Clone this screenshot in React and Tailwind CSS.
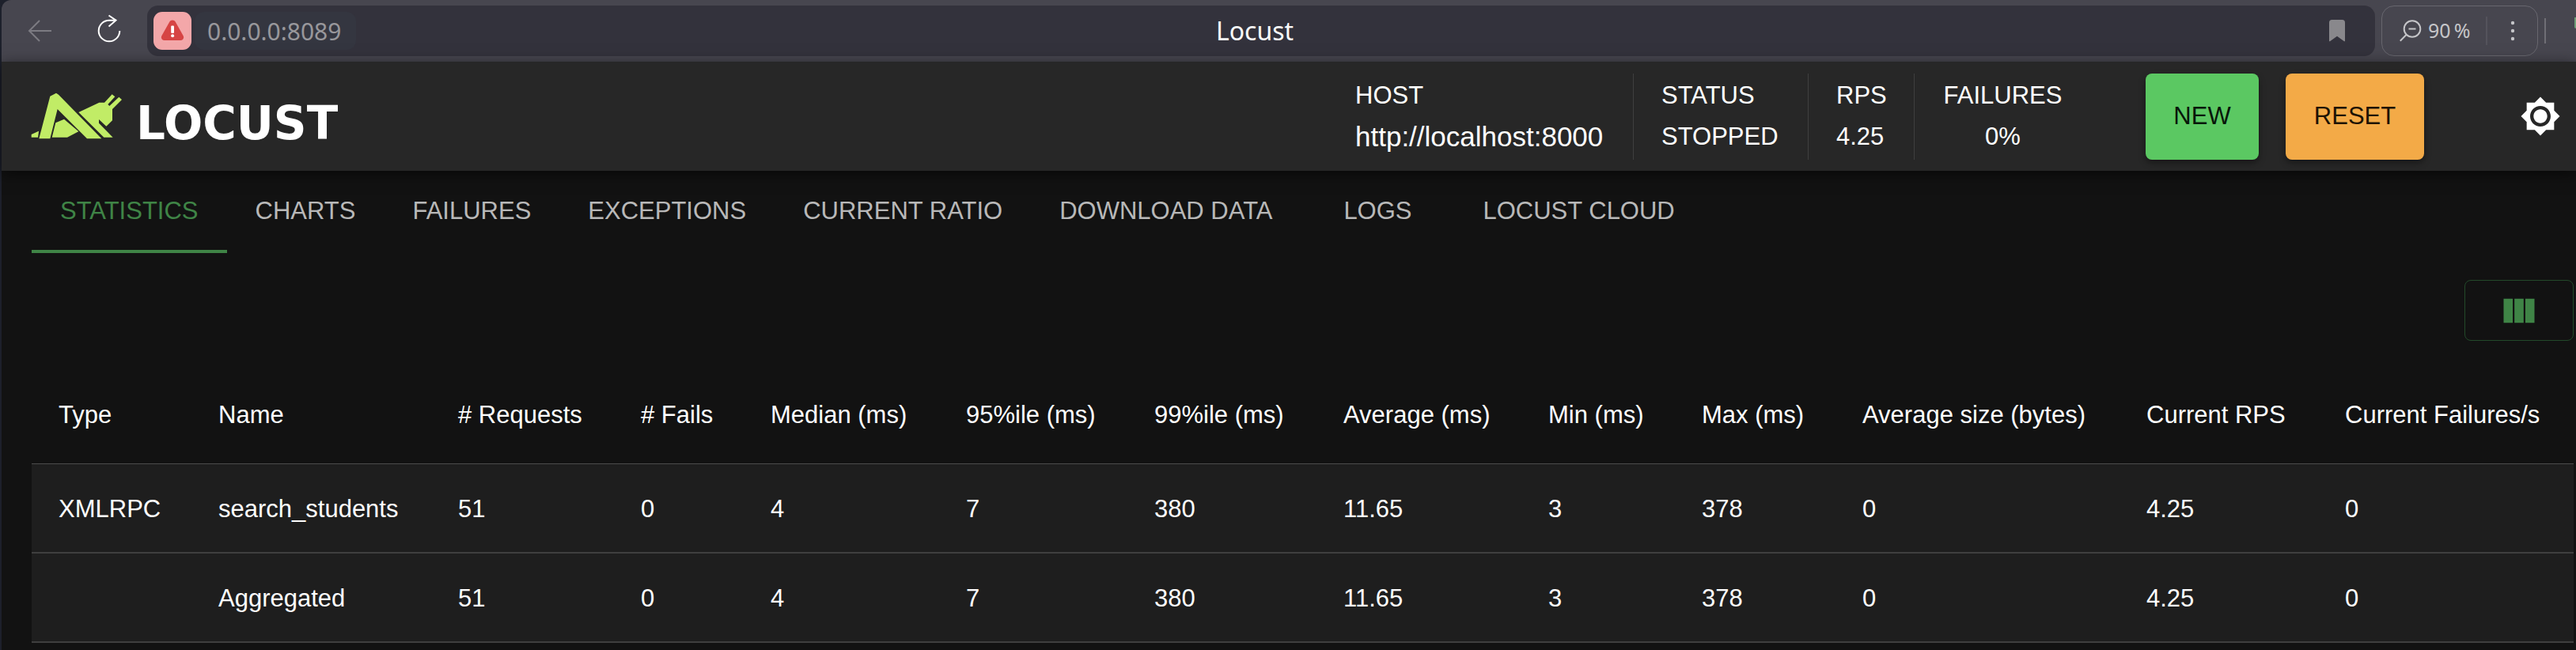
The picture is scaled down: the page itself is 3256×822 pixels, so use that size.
const tabs = [
  'Statistics',
  'Charts',
  'Failures',
  'Exceptions',
  'Current ratio',
  'Download data',
  'Logs',
  'Locust Cloud',
];

const columns = [
  { label: 'Type', width: 'w-[202px]' },
  { label: 'Name', width: 'w-[303px]' },
  { label: '# Requests', width: 'w-[231px]' },
  { label: '# Fails', width: 'w-[164px]' },
  { label: 'Median (ms)', width: 'w-[247px]' },
  { label: '95%ile (ms)', width: 'w-[238px]' },
  { label: '99%ile (ms)', width: 'w-[239px]' },
  { label: 'Average (ms)', width: 'w-[259px]' },
  { label: 'Min (ms)', width: 'w-[194px]' },
  { label: 'Max (ms)', width: 'w-[203px]' },
  { label: 'Average size (bytes)', width: 'w-[359px]' },
  { label: 'Current RPS', width: 'w-[251px]' },
  { label: 'Current Failures/s', width: 'w-[323px]' },
];

const rows = [
  ['XMLRPC', 'search_students', '51', '0', '4', '7', '380', '11.65', '3', '378', '0', '4.25', '0'],
  ['', 'Aggregated', '51', '0', '4', '7', '380', '11.65', '3', '378', '0', '4.25', '0'],
];

function BrowserBar() {
  return (
    <div className="flex h-[78px] items-center rounded-tl-[12px] bg-[#47464f] font-['Noto_Sans',sans-serif]">
      <button type="button" aria-label="Back" className="ml-[32px] shrink-0">
        <svg className="h-[32px] w-[32px]" viewBox="0 0 32 32" fill="none" stroke="#7c7b82" strokeWidth="2">
          <path d="M16 3 3 16l13 13M3 16h28" />
        </svg>
      </button>
      <button type="button" aria-label="Reload" className="ml-[54px] shrink-0">
        <svg
          className="h-[36px] w-[36px] overflow-visible"
          viewBox="0 0 36 36"
          fill="none"
          stroke="#ffffff"
          strokeWidth="2"
        >
          <path d="M31.300 18a13.300 13.300 0 1 1-13.300-13.300h8.500" />
          <path d="M17.500 -1.500 26.500 4.700 17.500 12.500" />
        </svg>
      </button>
      <div className="ml-[30px] flex h-[64px] flex-1 items-center rounded-[14px] bg-[#33323c] pr-[24px] pl-[8px]">
        <div className="flex flex-1 items-center gap-[4px]">
          <button
            type="button"
            aria-label="Connection is not secure"
            className="flex h-[48px] w-[48px] items-center justify-center rounded-[11px] bg-[#f3a7a9]"
          >
            <svg className="h-[30px] w-[30px]" viewBox="0 0 30 30">
              <path
                d="M11.200 3.800c1.700-3 5.900-3 7.600 0l9.700 17.200c1.600 2.900-.2 6-3.400 6H4.900c-3.200 0-5-3.100-3.400-6z"
                fill="#d64444"
              />
              <rect x="13.200" y="8.500" width="3.800" height="9.500" rx="1" fill="#ffffff" />
              <circle cx="15.100" cy="21.300" r="2" fill="#ffffff" />
            </svg>
          </button>
          <input
            type="text"
            aria-label="Address"
            defaultValue="0.0.0.0:8089"
            className="h-[48px] w-[204px] rounded-[12px] bg-[#343640] px-[16px] text-[30px] text-[#98979b] outline-none"
          />
        </div>
        <div className="text-[32px] text-[#fafafa]">Locust</div>
        <div className="flex flex-1 items-center justify-end">
          <button type="button" aria-label="Bookmark" className="mr-[14px]">
            <svg className="h-[28px] w-[20px]" viewBox="0 0 20 28" fill="#89888c">
              <path d="M0 3.500A3.500 3.500 0 0 1 3.500 0h13A3.500 3.500 0 0 1 20 3.500v23.200c0 .6-.6.800-1 .500l-9-6.500-9 6.500c-.4.300-1 .1-1-.5z" />
            </svg>
          </button>
        </div>
      </div>
      <div className="ml-[8px] flex h-[64px] w-[198px] items-center rounded-[16px] border border-[#67666e] text-[#c5c5c8]">
        <button type="button" className="ml-[22px] flex items-center gap-[8px]">
          <svg
            className="h-[28px] w-[28px]"
            viewBox="0 0 28 28"
            fill="none"
            stroke="currentColor"
            strokeWidth="2"
            aria-hidden="true"
          >
            <circle cx="16" cy="11.500" r="10.300" />
            <path d="M8.700 18.800.8 26.700M11.500 11.500h9" />
          </svg>
          <span className="w-[57px] text-left text-[25px] whitespace-nowrap">90&#8201;%</span>
        </button>
        <div className="ml-[16px] h-[36px] w-[2px] bg-[#54535c]" />
        <button type="button" aria-label="More" className="ml-[28px]">
          <svg className="h-[28px] w-[8px]" viewBox="0 0 8 28" fill="currentColor">
            <circle cx="4" cy="4" r="2.200" />
            <circle cx="4" cy="14" r="2.200" />
            <circle cx="4" cy="24" r="2.200" />
          </svg>
        </button>
      </div>
      <div className="ml-[8px] h-[32px] w-[2px] bg-[#6f6e75]" />
      <div className="mt-[22px] ml-[36px] h-[14px] w-[2px] self-start rounded-bl-full bg-[#6f9f77]" />
    </div>
  );
}

function Logo() {
  return (
    <a href="#" className="flex items-baseline">
      <svg className="h-[59px] w-[116px]" viewBox="117 352 348 177" fill="#c1ec66" aria-hidden="true">
        <path d="M119 511 147 498 144 522H119z" />
        <path d="M190 366 213 354 222 360 385 527H330L218 415 190 527H148z" />
        <path d="M211 467 243 453 298 500 255 522H197z" />
        <path d="M298 427 376 390H396L425 359 436 368 409 397 415 403 451 369 462 379 426 415V458L403 480 375 454V468L428 522H394z" />
      </svg>
      <span className="ml-[17px] font-['DejaVu_Sans',sans-serif] text-[58px] leading-[44px] font-bold text-white">
        LOCUST
      </span>
    </a>
  );
}

function Stat({ label, className, children }) {
  return (
    <div className={`flex h-[109px] flex-col justify-center ${className}`}>
      <div className="text-[31px] leading-[52px] uppercase">{label}</div>
      {children}
    </div>
  );
}

function Header() {
  return (
    <header className="relative flex h-[138px] items-center bg-[#272727] pr-[19px] pl-[37px] text-white shadow-[0_4px_18px_rgba(0,0,0,0.6)]">
      <Logo />
      <div className="ml-auto flex items-center">
        <Stat label="Host" className="w-[352px] border-r border-[#3f3f3f]">
          <div className="text-[35px] leading-[52px]">http://localhost:8000</div>
        </Stat>
        <Stat label="Status" className="w-[221px] border-r border-[#3f3f3f] pl-[35px]">
          <div className="text-[31px] leading-[52px] uppercase">Stopped</div>
        </Stat>
        <Stat label="RPS" className="w-[134px] border-r border-[#3f3f3f] pl-[35px]">
          <div className="text-[31px] leading-[52px]">4.25</div>
        </Stat>
        <Stat label="Failures" className="w-[188px] items-center pl-[35px]">
          <div className="text-[31px] leading-[52px]">0%</div>
        </Stat>
        <button
          type="button"
          className="ml-[104px] h-[109px] w-[143px] rounded-[8px] bg-[#5bc862] text-[31px] text-[#08170a] uppercase shadow-[0_4px_8px_rgba(0,0,0,0.4)]"
        >
          New
        </button>
        <button
          type="button"
          className="ml-[34px] h-[109px] w-[175px] rounded-[8px] bg-[#f3aa47] text-[31px] text-[#1d1304] uppercase shadow-[0_4px_8px_rgba(0,0,0,0.4)]"
        >
          Reset
        </button>
        <button type="button" aria-label="Toggle theme" className="ml-[121px]">
          <svg className="h-[52px] w-[52px]" viewBox="0 0 24 24" fill="currentColor">
            <path d="M20 8.690V4h-4.690L12 .69 8.690 4H4v4.690L.69 12 4 15.310V20h4.690L12 23.310 15.310 20H20v-4.690L23.310 12zM12 18c-3.310 0-6-2.690-6-6s2.690-6 6-6 6 2.690 6 6-2.690 6-6 6zm0-10c-2.210 0-4 1.790-4 4s1.790 4 4 4 4-1.790 4-4-1.790-4-4-4z" />
          </svg>
        </button>
      </div>
    </header>
  );
}

function Tabs() {
  return (
    <div role="tablist" className="flex h-[104px]">
      {tabs.map((tab, i) => (
        <button
          key={tab}
          type="button"
          role="tab"
          aria-selected={i === 0}
          className={`min-w-[194px] border-b-[4px] px-[36px] pt-[3px] text-[31px] whitespace-nowrap uppercase ${
            i === 0 ? 'border-[#3f8446] text-[#3f8446]' : 'border-transparent text-[#b8b8b8]'
          }`}
        >
          {tab}
        </button>
      ))}
    </div>
  );
}

function StatsTable() {
  return (
    <table className="w-full table-fixed border-collapse text-left text-[31px] leading-[44px] text-white">
      <thead>
        <tr className="h-[122px] border-b border-[#4b4b4b]">
          {columns.map((c) => (
            <th key={c.label} scope="col" className={`pl-[34px] font-normal whitespace-nowrap ${c.width}`}>
              {c.label}
            </th>
          ))}
        </tr>
      </thead>
      <tbody className="bg-[#1e1e1e]">
        {rows.map((row) => (
          <tr key={row[1]} className="h-[113px] border-b-2 border-[#3f3f3f]">
            {row.map((cell, i) => (
              <td key={columns[i].label} className="pt-[3px] pl-[34px]">
                {cell}
              </td>
            ))}
          </tr>
        ))}
      </tbody>
    </table>
  );
}

export default function App() {
  return (
    <div className="min-h-screen bg-[#1d202b] pl-[2px] font-['Liberation_Sans',Arial,sans-serif]">
      <BrowserBar />
      <Header />
      <main className="min-h-[606px] bg-[#121212] pr-[3px] pl-[38px]">
        <Tabs />
        <div className="flex justify-end pt-[34px] pb-[33px]">
          <button
            type="button"
            aria-label="Select columns"
            className="flex h-[77px] w-[138px] items-center justify-center rounded-[8px] border border-[#23492a] text-[#3f8446]"
          >
            <svg className="h-[52px] w-[52px]" viewBox="0 0 24 24" fill="currentColor">
              <path d="M14.670 5v14H9.330V5zm1 14H21V5h-5.330zm-7.340 0V5H3v14z" />
            </svg>
          </button>
        </div>
        <StatsTable />
      </main>
    </div>
  );
}
